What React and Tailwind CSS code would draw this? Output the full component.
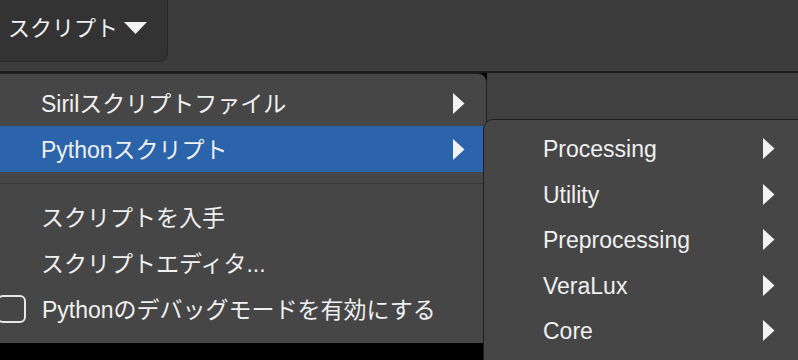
import React from 'react'

const font = { fontFamily: '"Liberation Sans", "Noto Sans CJK JP", sans-serif' }

const Arrow = () => (
  <svg width="13" height="21" viewBox="0 0 13 21" className="shrink-0">
    <polygon points="1,0 12.5,10.5 1,21" fill="#f2f2f2" />
  </svg>
)

const MenuRow = ({ label, active, arrow }) => (
  <div className={`flex items-center h-[46px] pl-[43px] pr-[21px] ${active ? 'bg-[#2b64ab]' : ''}`}>
    <span className="flex-1 text-[23px] text-[#f0f0f0] leading-none mt-[2px]">{label}</span>
    {arrow && <Arrow />}
  </div>
)

const subItems = ['Processing', 'Utility', 'Preprocessing', 'VeraLux', 'Core']

const App = () => {
  return (
    <div style={font} className="relative w-[798px] h-[360px] overflow-hidden bg-black">
      {/* top bar with the menu button */}
      <div className="h-[73px] bg-[#3c3c3c] border-b-2 border-[#1c1c1c]">
        <div className="flex items-center gap-[6px] w-[170px] h-[62px] -ml-[2px] pl-[10px] bg-[#333333] border-r border-b border-[#262626] rounded-br-[9px]">
          <span className="text-[22px] text-[#f0f0f0] leading-none -mt-[4px]">スクリプト</span>
          <svg width="23" height="12" viewBox="0 0 23 12" className="-mt-[6px]">
            <polygon points="0,0 23,0 11.5,12" fill="#f2f2f2" />
          </svg>
        </div>
      </div>

      <div className="flex h-[287px]">
        {/* main menu */}
        <div className="w-[489px] h-[270px] -ml-[2px] pt-[6px] bg-[#464646] border-t border-r border-[#202020] rounded-tr-[9px]">
          <MenuRow label="Sirilスクリプトファイル" arrow />
          <MenuRow label="Pythonスクリプト" active arrow />
          <div className="h-px bg-[#3a3a3a] mt-[11px] mb-[10px]" />
          <MenuRow label="スクリプトを入手" />
          <MenuRow label="スクリプトエディタ..." />
          <div className="flex items-center h-[46px]">
            <div className="w-[29px] h-[28px] -ml-[1px] mr-[16px] rounded-[6px] border-2 border-[#e6e6e6]" />
            <span className="text-[23px] text-[#f0f0f0] leading-none mt-[2px]">Pythonのデバッグモードを有効にする</span>
          </div>
        </div>
        <div className="flex-1 bg-[#404040]" />
      </div>

      {/* submenu */}
      <div className="absolute left-[483px] top-[119px] w-[330px] h-[260px] pt-[6px] bg-[#464646] border border-[#202020] rounded-tl-[10px]">
        {subItems.map((s) => (
          <div key={s} className="flex items-center h-[45.5px] pl-[59px] pr-[37px]">
            <span className="flex-1 text-[23px] text-[#f0f0f0] leading-none mt-[2px]">{s}</span>
            <Arrow />
          </div>
        ))}
      </div>
    </div>
  )
}

export default App
